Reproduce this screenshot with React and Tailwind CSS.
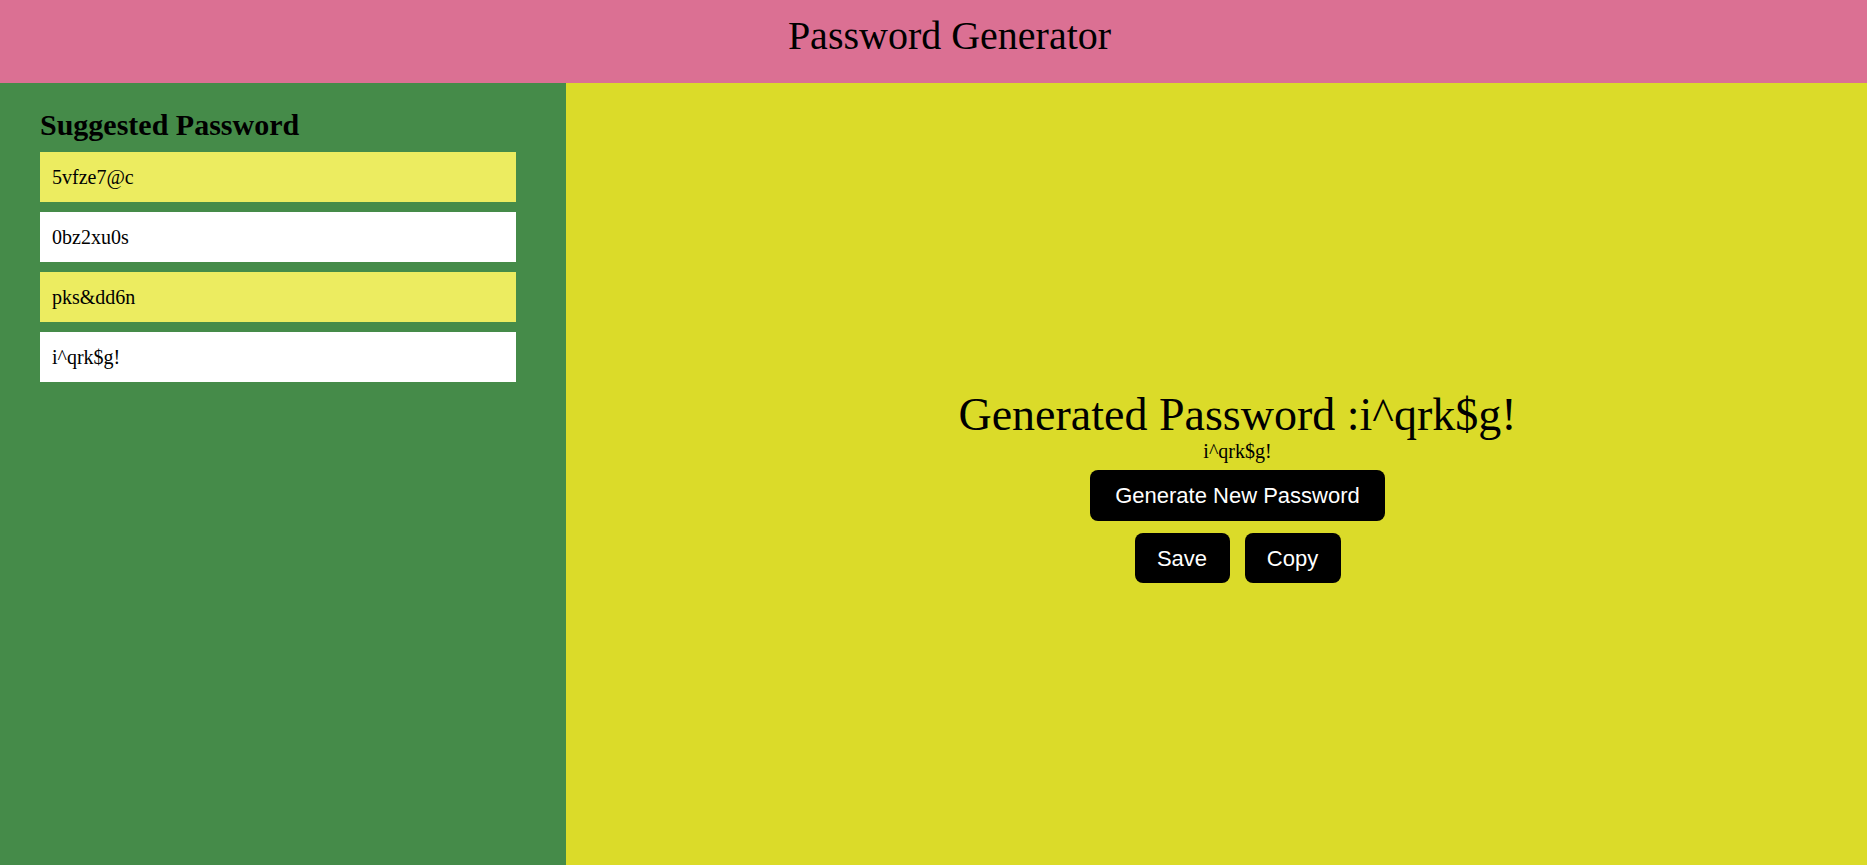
import React, { useState } from "react";

const suggestions = ["5vfze7@c", "0bz2xu0s", "pks&dd6n", "i^qrk$g!"];

export default function App() {
  const [password] = useState("i^qrk$g!");

  return (
    <div className="flex h-screen flex-col font-['Liberation_Serif','Times_New_Roman',serif] text-[20px] text-black">
      <header className="h-[83px] shrink-0 bg-[#db7093] pl-[32px] pt-[14px] text-center">
        <h1 className="text-[40px] font-normal leading-[44px]">Password Generator</h1>
      </header>

      <main className="flex flex-1">
        {/* Suggested list */}
        <aside className="w-[566px] shrink-0 bg-[#458b49] pl-[40px] pt-[25px]">
          <h2 className="mb-[11px] text-[30px] font-bold leading-[33px]">Suggested Password</h2>
          <div className="flex flex-col gap-[10px]">
            {suggestions.map((s, i) => (
              <div
                key={s}
                className={`flex h-[50px] w-[476px] items-center pl-[12px] leading-[23px] ${
                  i % 2 === 0 ? "bg-[#ecec60]" : "bg-white"
                }`}
              >
                {s}
              </div>
            ))}
          </div>
        </aside>

        {/* Generator */}
        <section className="flex flex-1 flex-col items-center justify-center bg-[#dbdb29] pl-[42px] pt-[22px]">
          <h1 className="text-[46px] font-normal leading-[55px]">Generated Password :{password}</h1>
          <p className="mt-[-2px] leading-[23px]">{password}</p>
          <button className="mt-[7px] h-[51px] rounded-lg bg-black px-[25px] font-['Liberation_Sans',Arial,sans-serif] text-[22px] text-white">
            Generate New Password
          </button>
          <div className="mt-[12px] flex gap-[15px]">
            <button className="h-[50px] w-[95px] rounded-lg bg-black font-['Liberation_Sans',Arial,sans-serif] text-[22px] text-white">
              Save
            </button>
            <button className="h-[50px] w-[96px] rounded-lg bg-black font-['Liberation_Sans',Arial,sans-serif] text-[22px] text-white">
              Copy
            </button>
          </div>
        </section>
      </main>
    </div>
  );
}
